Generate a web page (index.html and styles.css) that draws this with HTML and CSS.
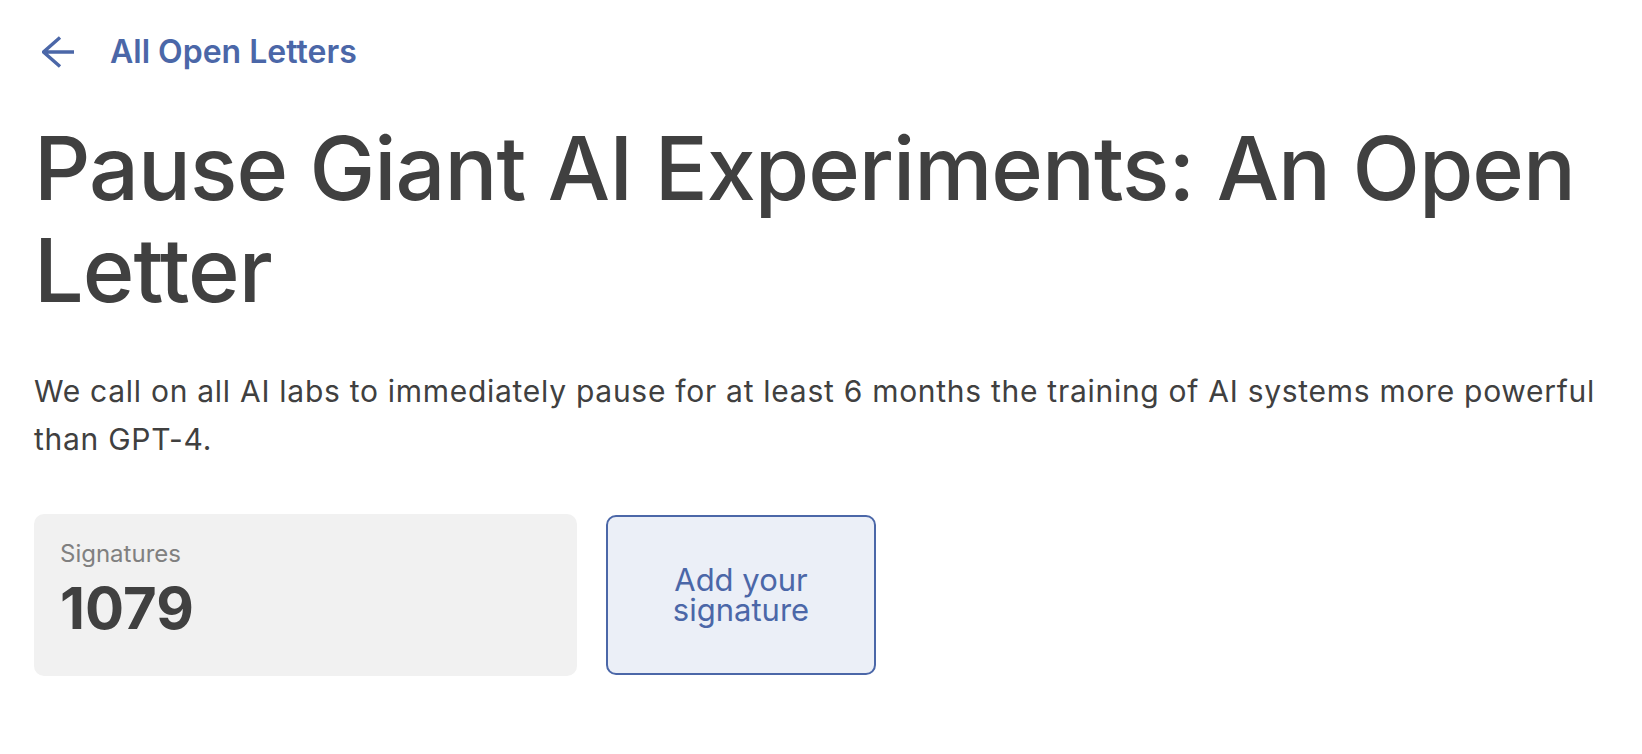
FILE: index.html
```html
<!DOCTYPE html>
<html lang="en">
<head>
    <meta charset="UTF-8">
    <meta name="viewport" content="width=device-width, initial-scale=1.0">
    <title>Pause Giant AI Experiments: An Open Letter</title>
    <link rel="stylesheet" href="styles.css">
</head>
<body>

    <div class="page">
        <!-- Back link -->
        <a class="back" href="#">
            <svg class="back-icon" width="32" height="32" viewBox="0 0 32 32" fill="none">
                <path d="M1.5 16H32M18 1.5L1.5 16L18 30.5" stroke="currentColor" stroke-width="3.4"/>
            </svg>
            <span>All Open Letters</span>
        </a>

        <!-- Title -->
        <h1 class="title">Pause Giant AI Experiments: An Open Letter</h1>

        <p class="lead">We call on all AI labs to immediately pause for at least 6 months the training of AI systems more powerful than GPT-4.</p>

        <!-- Signature count and button -->
        <div class="actions">
            <div class="count">
                <div class="count-label">Signatures</div>
                <div class="count-value">1079</div>
            </div>
            <button class="sign">Add your signature</button>
        </div>
    </div>

</body>
</html>
```

FILE: styles.css
```css
body {
    font-family: Inter, "Noto Sans", sans-serif;
    margin: 0;
    padding: 0;
    background-color: #fff;
    color: #404040;
}

.page {
    padding: 34px 16px 0 34px;
}

.back {
    display: inline-flex;
    align-items: center;
    gap: 36px;
    color: #4b67a8;
    text-decoration: none;
    font-size: 32px;
    font-weight: 600;
    line-height: 36px;
    padding-left: 8px;
}

.back-icon {
    display: block;
}

.title {
    margin: 45px 0 0 0;
    font-size: 88px;
    font-weight: 500;
    line-height: 102px;
    letter-spacing: -1px;
    color: #404040;
}

.lead {
    margin: 46px 0 0 0;
    font-size: 30px;
    line-height: 48px;
    letter-spacing: 0.72px;
    color: #404040;
}

.actions {
    display: flex;
    align-items: center;
    gap: 29px;
    margin-top: 51px;
}

.count {
    box-sizing: border-box;
    width: 543px;
    height: 162px;
    padding: 25px 26px;
    background-color: #f1f1f1;
    border-radius: 10px;
}

.count-label {
    font-size: 24px;
    line-height: 29px;
    color: #808080;
}

.count-value {
    margin-top: 10px;
    font-size: 58px;
    font-weight: 700;
    line-height: 60px;
    color: #404040;
}

.sign {
    box-sizing: border-box;
    width: 270px;
    height: 160px;
    padding: 0 30px;
    background-color: #ebeff7;
    border: 2px solid #4b67a8;
    border-radius: 10px;
    color: #4b67a8;
    font-family: inherit;
    font-size: 31px;
    line-height: 30px;
    cursor: pointer;
}
```
